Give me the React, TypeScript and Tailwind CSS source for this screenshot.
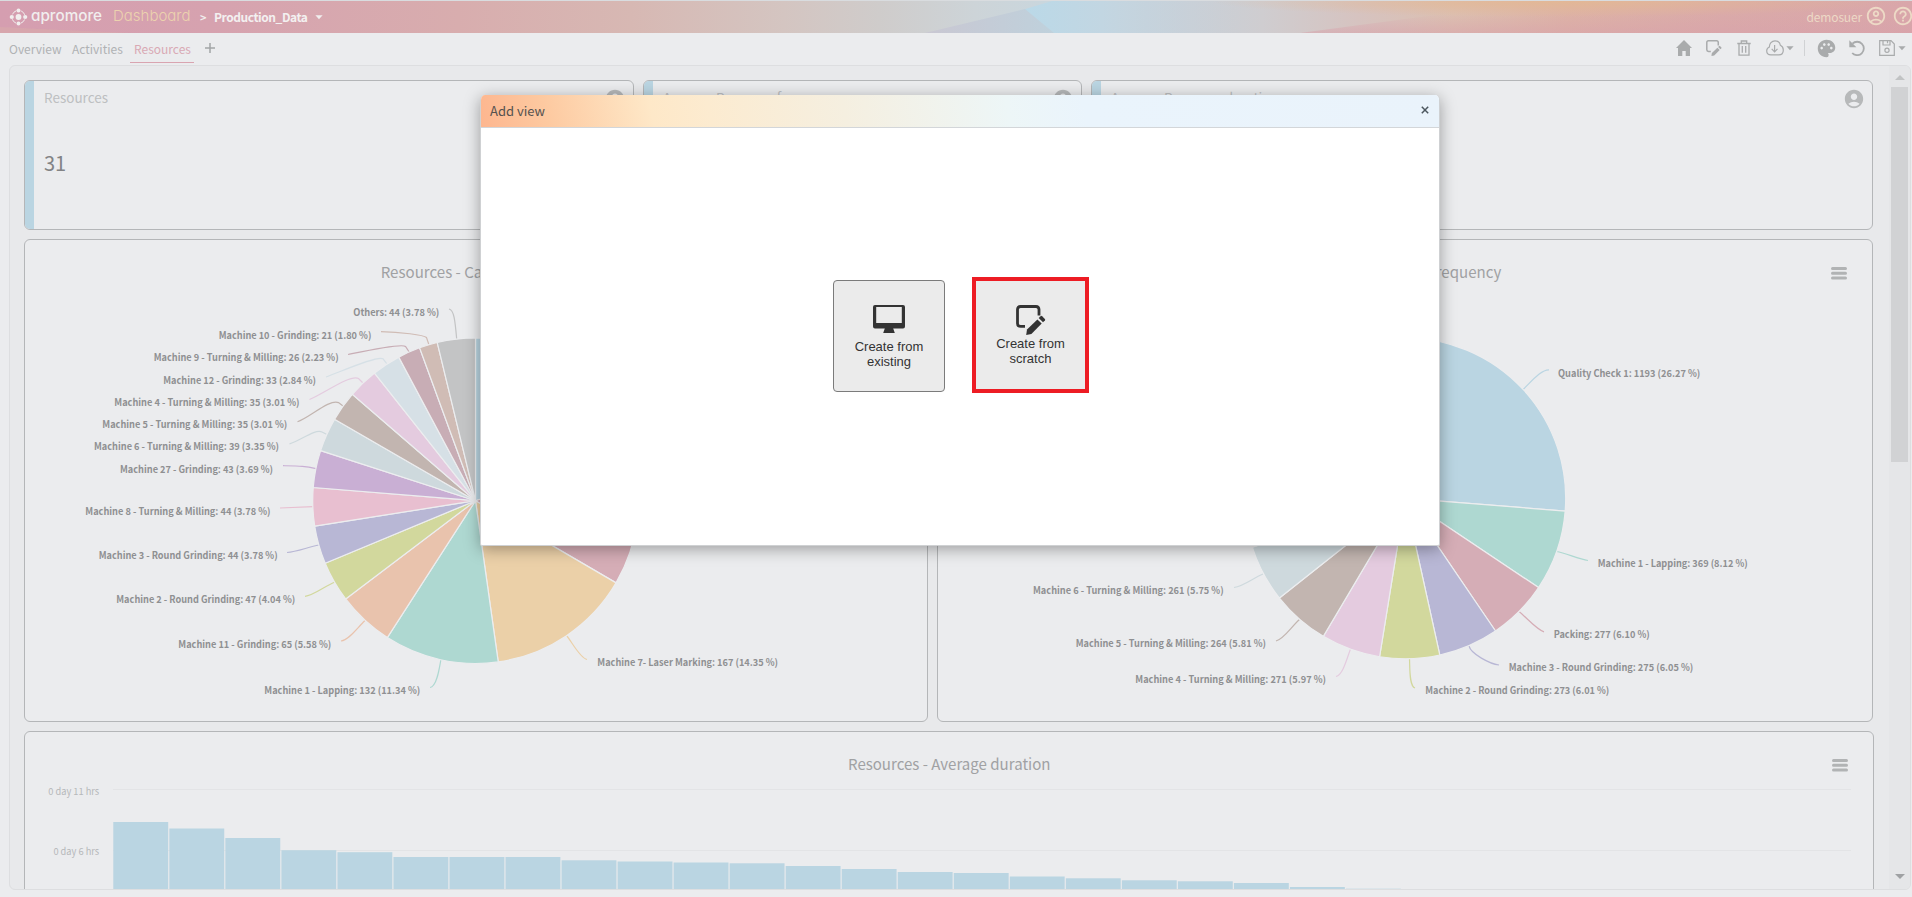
import React from "react";
import { MdAccountCircle, MdHelpOutline, MdOutlineAccountCircle, MdPalette } from "react-icons/md";

type Point = [number, number];

interface Slice {
  value: number;
  color: string;
}

interface Callout {
  text: string;
  x: number;
  y: number;
  width: number;
  line: string;
  color: string;
}

const BLUE = "#bad5e2";
const MINT = "#aed8d1";
const GOLD = "#ebd0a8";
const ROSE = "#d5adb6";
const ORANGE = "#e9c3ad";
const OLIVE = "#d2d89d";
const LAVENDER = "#b8b7d5";
const PINK = "#e8bfd0";
const PURPLE = "#c9afd4";
const MIST = "#ced9dd";
const BROWN = "#c2b5b0";
const ORCHID = "#e4cbdf";
const SKY = "#d6e0e6";
const MAUVE = "#c8adb5";
const TAN = "#d0bcb5";
const GRAY = "#c3c4c5";

const caseSlices: Slice[] = [
  { value: 20.2, color: BLUE },
  { value: 13.22, color: ROSE },
  { value: 14.35, color: GOLD },
  { value: 11.34, color: MINT },
  { value: 5.58, color: ORANGE },
  { value: 4.04, color: OLIVE },
  { value: 3.78, color: LAVENDER },
  { value: 3.78, color: PINK },
  { value: 3.69, color: PURPLE },
  { value: 3.35, color: MIST },
  { value: 3.01, color: BROWN },
  { value: 3.01, color: ORCHID },
  { value: 2.84, color: SKY },
  { value: 2.23, color: MAUVE },
  { value: 1.8, color: TAN },
  { value: 3.78, color: GRAY },
];

const totalSlices: Slice[] = [
  { value: 26.27, color: BLUE },
  { value: 8.12, color: MINT },
  { value: 6.1, color: ROSE },
  { value: 6.05, color: LAVENDER },
  { value: 6.01, color: OLIVE },
  { value: 5.97, color: ORCHID },
  { value: 5.81, color: BROWN },
  { value: 5.75, color: MIST },
  { value: 5.5, color: GOLD },
  { value: 24.42, color: GRAY },
];

const caseCallouts: Callout[] = [
  { text: "Others: 44 (3.78 %)", x: 353.3, y: 315.6, width: 86, color: GRAY, line: "M449 309C454 310 455 320 456.7 339" },
  { text: "Machine 10 - Grinding: 21 (1.80 %)", x: 218.7, y: 338.6, width: 152.7, color: TAN, line: "M381 331.7C400 332 424 335 426.5 337.5L428.7 344" },
  { text: "Machine 9 - Turning & Milling: 26 (2.23 %)", x: 153.7, y: 360.6, width: 185, color: MAUVE, line: "M348 354.5C365 351 402 343 405.5 346.5L409.5 352.5" },
  { text: "Machine 12 - Grinding: 33 (2.84 %)", x: 163.3, y: 383.6, width: 152.7, color: SKY, line: "M326 377C340 372 378 355 383 358.8L387 364" },
  { text: "Machine 4 - Turning & Milling: 35 (3.01 %)", x: 114.3, y: 405.6, width: 185.3, color: ORCHID, line: "M309.5 399.5C322 395 350 374 358.5 378.5L363 383" },
  { text: "Machine 5 - Turning & Milling: 35 (3.01 %)", x: 102.3, y: 427.6, width: 185, color: BROWN, line: "M297.5 421.8C309 418 330 398.5 338.5 402.6L343 406" },
  { text: "Machine 6 - Turning & Milling: 39 (3.35 %)", x: 94, y: 449.6, width: 185, color: MIST, line: "M289.5 443.8C300 441 315 428.5 322 432L327 434.5" },
  { text: "Machine 27 - Grinding: 43 (3.69 %)", x: 120, y: 472.6, width: 153, color: PURPLE, line: "M283 465.7C300 466 305 466 316 468.6" },
  { text: "Machine 8 - Turning & Milling: 44 (3.78 %)", x: 85.3, y: 514.6, width: 185.3, color: PINK, line: "M280 508L313 506.6" },
  { text: "Machine 3 - Round Grinding: 44 (3.78 %)", x: 98.7, y: 558.6, width: 179, color: LAVENDER, line: "M287 552.5C297 552 308 547 319 545" },
  { text: "Machine 2 - Round Grinding: 47 (4.04 %)", x: 116.3, y: 602.6, width: 179, color: OLIVE, line: "M305 596.3C313 596 325 586 335 582" },
  { text: "Machine 11 - Grinding: 65 (5.58 %)", x: 178.3, y: 647.6, width: 153, color: ORANGE, line: "M341 641C349 640 357 628 365 620.5" },
  { text: "Machine 1 - Lapping: 132 (11.34 %)", x: 264.3, y: 693.6, width: 156, color: MINT, line: "M430 687.5C437 687 439.5 667 441 659" },
  { text: "Machine 7- Laser Marking: 167 (14.35 %)", x: 597.3, y: 665.6, width: 180.7, color: GOLD, line: "M587 659.5C580 658 572 642 566.5 635.5" },
];

const totalCallouts: Callout[] = [
  { text: "Quality Check 1: 1193 (26.27 %)", x: 1558, y: 376.6, width: 142.3, color: BLUE, line: "M1549 369.8C1541 369.5 1531 382 1523 389.5" },
  { text: "Machine 1 - Lapping: 369 (8.12 %)", x: 1597.7, y: 566.6, width: 150, color: MINT, line: "M1588 560.5C1578 559 1566 553 1556.5 551.5" },
  { text: "Packing: 277 (6.10 %)", x: 1553.7, y: 637.6, width: 96, color: ROSE, line: "M1544 631.8C1537 630 1526 617 1519 611.5" },
  { text: "Machine 3 - Round Grinding: 275 (6.05 %)", x: 1508.7, y: 670.6, width: 184.6, color: LAVENDER, line: "M1499 665C1490 664 1471 654 1469 646" },
  { text: "Machine 2 - Round Grinding: 273 (6.01 %)", x: 1425.3, y: 693.6, width: 184, color: OLIVE, line: "M1415 688C1409 686 1410 668 1409.5 659" },
  { text: "Machine 4 - Turning & Milling: 271 (5.97 %)", x: 1135.3, y: 682.6, width: 190.7, color: ORCHID, line: "M1336 676.5C1343 675 1347 658 1350.5 649" },
  { text: "Machine 5 - Turning & Milling: 264 (5.81 %)", x: 1075.7, y: 646.6, width: 190.3, color: BROWN, line: "M1276 641C1284 639 1291 627 1299.5 619.5" },
  { text: "Machine 6 - Turning & Milling: 261 (5.75 %)", x: 1033, y: 593.6, width: 190.7, color: MIST, line: "M1234 587.5C1244 586 1253 578 1263 574" },
];

const barTops = [
  822, 828.5, 838, 850.2, 852.2, 857, 857, 857, 860.3, 861.5, 862.5, 863.3, 866, 869, 872, 873, 876.5, 878.3, 880.3,
  881.3, 883, 887, 888.7,
];

function Pie({ center, radius, slices }: { center: Point; radius: number; slices: Slice[] }) {
  const total = slices.reduce((sum, s) => sum + s.value, 0);
  const at = (v: number) => {
    const a = (v / total) * Math.PI * 2;
    return `${center[0] + radius * Math.sin(a)} ${center[1] - radius * Math.cos(a)}`;
  };
  let start = 0;
  return (
    <g stroke="#ecedef" strokeWidth="1.2" strokeLinejoin="round">
      {slices.map((s, i) => {
        const from = start;
        start += s.value;
        const large = s.value / total > 0.5 ? 1 : 0;
        return (
          <path
            key={i}
            fill={s.color}
            d={`M${center[0]} ${center[1]}L${at(from)}A${radius} ${radius} 0 ${large} 1 ${at(start)}Z`}
          />
        );
      })}
    </g>
  );
}

function Callouts({ items }: { items: Callout[] }) {
  return (
    <>
      {items.map((c) => (
        <g key={c.text}>
          <path d={c.line} fill="none" stroke={c.color} strokeWidth="1.2" />
          <text
            x={c.x}
            y={c.y}
            textLength={c.width}
            lengthAdjust="spacingAndGlyphs"
            className="fill-[#8f9092] text-[9.7px] font-bold"
          >
            {c.text}
          </text>
        </g>
      ))}
    </>
  );
}

function MenuBars({ x, y }: { x: number; y: number }) {
  return (
    <g stroke="#b1b3b4" strokeWidth="3" strokeLinecap="round">
      <path d={`M${x + 1.5} ${y + 1.5}h13M${x + 1.5} ${y + 6.3}h13M${x + 1.5} ${y + 11}h13`} />
    </g>
  );
}

function ChartTitle({ x, y, width, children }: { x: number; y: number; width: number; children: string }) {
  return (
    <text x={x} y={y} textLength={width} lengthAdjust="spacingAndGlyphs" className="fill-[#a0a1a3] text-[15px]">
      {children}
    </text>
  );
}

function StatCard({ title, value, className }: { title: string; value?: string; className: string }) {
  return (
    <div className={`flex h-[150px] shrink-0 overflow-hidden rounded-md border border-[#b4b6b8] bg-[#ebecee] ${className}`}>
      <div className="w-[9px] shrink-0 bg-[#bad5e2]" />
      <div className="flex grow flex-col pl-[10px]">
        <div className="flex items-start justify-between pr-[7px]">
          <span className="pt-[6px] text-[13.5px] leading-[21px] text-[#bdbfc1]">{title}</span>
          <MdAccountCircle className="mt-[7px] size-[22px] text-[#b7b9ba]" />
        </div>
        <span className="pt-[38px] text-[20px] leading-[30px] text-[#828385]">{value}</span>
      </div>
    </div>
  );
}

function Caret({ className }: { className: string }) {
  return (
    <svg viewBox="0 0 8 5" className={`h-[5px] w-2 fill-current ${className}`}>
      <path d="M0.4 0.3H7.6L4 4.3Z" />
    </svg>
  );
}

function NoteEditIcon({ className }: { className: string }) {
  return (
    <svg viewBox="0 0 30 30" className={`fill-none ${className}`}>
      <path
        d="M23 10.5V4.5Q23 1.5 20 1.5H4.5Q1.5 1.5 1.5 4.5V18.5Q1.5 21.4 4.8 21.4H9"
        stroke="currentColor"
        strokeWidth="2.8"
      />
      <path d="M10.2 30L11 24.6L21.4 14.4L25.7 18.6L15.4 29Z" fill="currentColor" />
      <path d="M22.7 13.1L24.6 11.2Q25.4 10.5 26.1 11.2L28.9 14Q29.5 14.7 28.9 15.4L27 17.3Z" fill="currentColor" />
    </svg>
  );
}

function TopBar() {
  return (
    <header className="relative h-8 w-full bg-[linear-gradient(90deg,#d59eb0_0%,#d6a2af_11%,#d8adae_24%,#d7b8b3_33%,#d4c5c1_41%,#cfcccb_46%,#cdd4d8_51%,#c8d7df_56%,#c3d2dd_60%,#cfcdd0_66%,#d6c3c0_71%,#dcbfb0_76%,#ddb2a6_82%,#daaaa9_90%,#d9a6aa_100%)]">
      <svg viewBox="0 0 1912 32" className="absolute inset-0 h-8 w-[1912px]" preserveAspectRatio="none">
        <defs>
          <linearGradient id="beam" x1="0" x2="1">
            <stop offset="0" stopColor="#bad9e8" />
            <stop offset="0.35" stopColor="#c2d6e2" />
            <stop offset="1" stopColor="#cfcdd1" stopOpacity="0" />
          </linearGradient>
          <linearGradient id="fold" x1="0" x2="1">
            <stop offset="0" stopColor="#c9c7d2" />
            <stop offset="1" stopColor="#bfd1dc" />
          </linearGradient>
          <radialGradient id="glow" cx="0.5" cy="0" r="0.5">
            <stop offset="0" stopColor="#e3b894" stopOpacity="0.9" />
            <stop offset="1" stopColor="#e3b894" stopOpacity="0" />
          </radialGradient>
          <linearGradient id="blush" x1="0" x2="0" y1="0" y2="1">
            <stop offset="0.2" stopColor="#d8a2ab" stopOpacity="0" />
            <stop offset="1" stopColor="#d8a2ab" stopOpacity="0.55" />
          </linearGradient>
        </defs>
        <path d="M1052 0H1250V32H1054L1022 9Z" fill="url(#beam)" />
        <path d="M925 32L1025 8L1054 32Z" fill="url(#fold)" />
        <path d="M0 26Q60 29 130 32H0Z" fill="#d9abab" opacity="0.6" />
        <rect x="1210" width="700" height="32" fill="url(#glow)" />
        <path d="M1300 32L1480 8H1912V32Z" fill="url(#blush)" />
      </svg>
      <div className="relative flex h-8 items-center">
        <svg viewBox="0 0 205 32" className="h-8 w-[205px] shrink-0">
          <g className="fill-[#f1eeee]">
            <circle cx="18.5" cy="16" r="2.9" />
            <circle cx="11.8" cy="16" r="2.1" />
            <circle cx="25.2" cy="16" r="2.1" />
            <circle cx="18.5" cy="9.6" r="2" />
            <circle cx="18.5" cy="22.4" r="2" />
          </g>
          <circle cx="18.5" cy="16" r="6.6" fill="none" stroke="#f1eeee" strokeWidth="1" strokeDasharray="5.4 4.97" strokeDashoffset="-2.5" />
          <text
            x="31"
            y="20"
            textLength="71"
            lengthAdjust="spacingAndGlyphs"
            className="fill-[#f1eeee] font-[Inter,sans-serif] text-[15px] font-medium [font-feature-settings:'cv11']"
          >
            apromore
          </text>
          <text
            x="113"
            y="20.3"
            textLength="77.5"
            lengthAdjust="spacingAndGlyphs"
            className="fill-[#ecd2ae] font-[Inter,sans-serif] text-[15px] font-light [font-feature-settings:'cv11']"
          >
            Dashboard
          </text>
        </svg>
        <span className="-ml-[5px] w-[14px] text-[11px] leading-[30px] font-bold text-[#f1eeee]">&gt;</span>
        <span className="text-[12px] leading-[30px] font-bold tracking-[-0.45px] text-[#f3f0f0]">Production_Data</span>
        <Caret className="ml-2 text-[#f1eeee]" />
        <div className="ml-auto flex h-8 items-center text-[#edd9c6]">
          <span className="text-[12px] leading-8 tracking-[-0.15px]">demosuer</span>
          <MdOutlineAccountCircle className="mb-[2px] ml-[3px] size-[22px]" />
          <MdHelpOutline className="-mr-[2px] mb-[2px] ml-[5px] size-[22px]" />
        </div>
      </div>
    </header>
  );
}

function Toolbar() {
  return (
    <div className="flex h-8 items-center bg-[#ebecee] pl-[9px] text-[12px] text-[#b0b2b4]">
      <span className="w-[63px] leading-[30px]">Overview</span>
      <span className="w-[58px] leading-[30px]">Activities</span>
      <span className="mt-[1px] h-[26px] w-[64px] border-b border-[#d9a4b0] pl-1 leading-[24px] text-[#d9a9b4]">Resources</span>
      <svg viewBox="0 0 10 10" className="mb-[2px] ml-[11px] size-[10px]">
        <path d="M5 0V10M0 5H10" stroke="#a3a5a7" strokeWidth="1.5" />
      </svg>
      <div className="ml-auto flex h-8 items-center pb-[2px] text-[#a9abac]">
        <svg viewBox="0 0 16 16" className="h-4 w-4 fill-current">
          <path d="M8 0L16 8H14V16H9.7V11H6.3V16H2V8H0Z" />
        </svg>
        <NoteEditIcon className="ml-[14px] size-4" />
        <svg viewBox="0 0 14 16" className="ml-[15px] h-4 w-[14px] fill-none stroke-current" strokeWidth="1.3">
          <path d="M0.3 3.5H13.7M4.3 3.3V1H9.7V3.3M2 3.5V15.2H12V3.5M5.3 6V12.8M8.7 6V12.8" />
        </svg>
        <svg viewBox="0 0 18 16" className="ml-[15px] h-4 w-[18px] fill-none stroke-current" strokeWidth="1.2">
          <path d="M5 14.9C2.5 14.9 0.7 13.2 0.7 10.8C0.7 8.9 1.8 7.6 3.4 7C3.2 3.4 5.8 0.8 9 0.8C11.8 0.8 14 2.5 14.4 5.3C16.2 6.2 17.3 7.9 17.3 10C17.3 12.9 15.4 14.9 12.8 14.9Z" />
          <path d="M8.6 5V11.6M5.7 8.9L8.6 11.8L11.5 8.9" />
        </svg>
        <Caret className="ml-[2px]" />
        <div className="ml-[10px] h-4 w-px bg-[#d0d2d4]" />
        <MdPalette className="ml-[11px] size-[21px]" />
        <svg viewBox="0 0 16 16" className="ml-[12px] h-4 w-4 fill-none">
          <path d="M3.4 3.7A6.7 6.7 0 1 1 3.2 13" stroke="currentColor" strokeWidth="1.8" />
          <path d="M0.3 0.3V7.2H7.4Z" fill="currentColor" />
        </svg>
        <svg viewBox="0 0 16 16" className="ml-[14px] h-4 w-4 fill-none stroke-current" strokeWidth="1.2">
          <path d="M0.7 0.7H12L15.3 4V15.3H0.7ZM4 0.7V5H11V0.7M8.5 1V3.2" />
          <circle cx="8" cy="10.3" r="2.1" />
        </svg>
        <Caret className="mr-[6px] ml-[3px]" />
      </div>
    </div>
  );
}

function Scrollbar() {
  return (
    <div className="ml-auto flex w-[21px] shrink-0 flex-col items-center bg-[#e5e6e8]">
      <svg viewBox="0 0 10 5" className="mt-[9px] h-[5px] w-[10px] fill-[#c1c3c4]">
        <path d="M0 5L5 0L10 5Z" />
      </svg>
      <div className="mt-[7px] h-[375px] w-[17px] bg-[#d1d2d4]" />
      <svg viewBox="0 0 10 5" className="mt-auto mb-[10px] h-[5px] w-[10px] fill-[#9fa1a3]">
        <path d="M0 0L5 5L10 0Z" />
      </svg>
    </div>
  );
}

function Board() {
  return (
    <div className="ml-[9px] flex h-[825px] w-[1902px] overflow-hidden rounded-md border border-[#dddee0] bg-[#e8e9eb]">
      <div className="flex w-[1865px] flex-col gap-[9px] pt-[14px] pl-[14px]">
        <div className="flex gap-[9px]">
          <StatCard title="Resources" value="31" className="w-[610px]" />
          <StatCard title="Average Resource frequency" className="w-[439px]" />
          <StatCard title="Average Resource duration" className="w-[782px]" />
        </div>
        <div className="flex gap-[9px]">
          <div className="h-[483px] w-[904px] shrink-0 rounded-md border border-[#b4b6b8] bg-[#ebecee]">
            <svg viewBox="25 240 902 481" className="h-[481px] w-[902px]">
              <ChartTitle x={380.7} y={278} width={191}>
                Resources - Case frequency
              </ChartTitle>
              <Callouts items={caseCallouts} />
              <Pie center={[475.5, 500.7]} radius={162.8} slices={caseSlices} />
            </svg>
          </div>
          <div className="h-[483px] w-[936px] shrink-0 rounded-md border border-[#b4b6b8] bg-[#ebecee]">
            <svg viewBox="938 240 934 481" className="h-[481px] w-[934px]">
              <ChartTitle x={1309.3} y={278} width={192}>
                Resources - Total frequency
              </ChartTitle>
              <MenuBars x={1831} y={267} />
              <Callouts items={totalCallouts} />
              <Pie center={[1405.2, 498.3]} radius={160.5} slices={totalSlices} />
            </svg>
          </div>
        </div>
        <div className="h-[483px] w-[1850px] shrink-0 rounded-md border border-[#b4b6b8] bg-[#ebecee]">
          <svg viewBox="25 732 1848 481" className="h-[481px] w-[1848px]">
            <ChartTitle x={848} y={770} width={202.5}>
              Resources - Average duration
            </ChartTitle>
            <MenuBars x={1832} y={759} />
            <path d="M113 789.5H1851M113 850.5H1851" stroke="#e3e4e6" />
            <g className="fill-[#b6b8ba] text-[9.5px]">
              <text x="48.2" y="794.5" textLength="51" lengthAdjust="spacingAndGlyphs">
                0 day 11 hrs
              </text>
              <text x="53.4" y="854.5" textLength="45.8" lengthAdjust="spacingAndGlyphs">
                0 day 6 hrs
              </text>
            </g>
            {barTops.map((top, i) => (
              <rect
                key={i}
                x={113.3 + i * 56.03}
                y={top}
                width="54.9"
                height={1000 - top}
                fill="#bad5e2"
              />
            ))}
          </svg>
        </div>
      </div>
      <Scrollbar />
    </div>
  );
}

function AddViewDialog() {
  return (
    <div className="absolute top-[95px] left-[480px] flex h-[451px] w-[960px] flex-col overflow-hidden rounded-t-[5px] rounded-b-[2px] border border-t-0 border-[#cfd1d3] bg-white shadow-[0_3px_16px_rgba(0,0,0,0.34)]">
      <div className="flex h-[33px] shrink-0 items-center justify-between border-b border-[#d3d6d9] bg-[linear-gradient(78deg,#fdb68f_0%,#fdc9a0_7%,#fee8c8_18%,#fcebd0_24%,#f5efe0_38%,#edf6f7_55%,#eaf4fc_63%,#eaf3fb_100%)] pr-[10px] pl-[9px]">
        <span className="text-[13px] leading-8 text-[#55524f]">Add view</span>
        <svg viewBox="0 0 8 8" className="mb-[2px] size-2">
          <path d="M0.8 0.8L7.2 7.2M7.2 0.8L0.8 7.2" stroke="#4c565e" strokeWidth="1.5" />
        </svg>
      </div>
      <div className="flex grow items-start pl-[352px] text-center font-['Liberation_Sans',Arial,sans-serif] text-[13px] leading-[15px] text-[#333]">
        <div className="mt-[152px] flex h-[112px] w-[112px] flex-col items-center rounded border border-[#7b7b7b] bg-[#ebebeb] pt-6">
          <svg viewBox="0 0 32 28" className="h-7 w-8 fill-[#333]">
            <path
              fillRule="evenodd"
              d="M2 0H30Q32 0 32 2V21.5Q32 23.5 30 23.5H20.2L21.8 28H10.2L11.8 23.5H2Q0 23.5 0 21.5V2Q0 0 2 0ZM3.2 2V18H28.8V2Z"
            />
          </svg>
          <span className="mt-[6px]">
            Create from
            <br />
            existing
          </span>
        </div>
        <div className="mt-[149px] ml-[27px] flex h-[116px] w-[117px] flex-col items-center border-4 border-[#ed1c24] bg-[#ebebeb] pt-6">
          <NoteEditIcon className="size-[30px] text-[#333]" />
          <span className="mt-[1px]">
            Create from
            <br />
            scratch
          </span>
        </div>
      </div>
    </div>
  );
}

export default function App() {
  return (
    <div className="relative h-[897px] w-[1912px] overflow-hidden bg-[#ebecee] font-['Noto_Sans_CJK_SC','Noto_Sans',sans-serif]">
      <div className="h-px bg-[#d9dcdf]" />
      <TopBar />
      <Toolbar />
      <Board />
      <AddViewDialog />
    </div>
  );
}
